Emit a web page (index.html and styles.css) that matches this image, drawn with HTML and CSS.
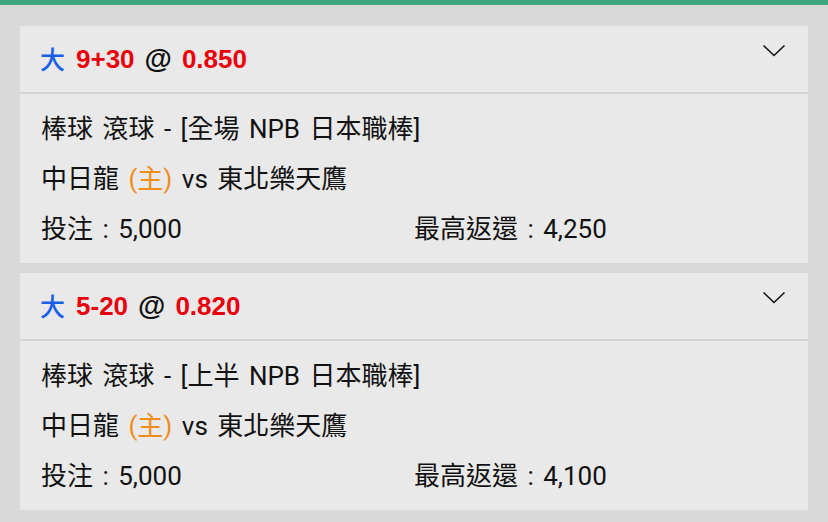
FILE: index.html
```html
<!DOCTYPE html>
<html lang="zh-Hant">
<head>
  <meta charset="UTF-8" />
  <meta name="viewport" content="width=device-width, initial-scale=1.0"/>
  <title>注單</title>
  <link rel="stylesheet" href="styles.css">
</head>
<body>

  <div class="top-bar"></div>

  <div class="bet-list">
    <div class="bet-card">
      <div class="bet-head">
        <span class="pick">大</span>
        <span class="line">9+30</span>
        <span class="at">@</span>
        <span class="odds">0.850</span>
        <svg class="chevron" width="24" height="14" viewBox="0 0 24 14"><path d="M1.5 1.5 L12 11.5 L22.5 1.5" fill="none" stroke="#111" stroke-width="1.6"/></svg>
      </div>
      <div class="bet-body">
        <p>棒球 滾球 - [全場 NPB 日本職棒]</p>
        <p>中日龍 <span class="home">(主)</span> vs 東北樂天鷹</p>
        <div class="amounts">
          <p>投注 : 5,000</p>
          <p>最高返還 : 4,250</p>
        </div>
      </div>
    </div>

    <div class="bet-card">
      <div class="bet-head">
        <span class="pick">大</span>
        <span class="line">5-20</span>
        <span class="at">@</span>
        <span class="odds">0.820</span>
        <svg class="chevron" width="24" height="14" viewBox="0 0 24 14"><path d="M1.5 1.5 L12 11.5 L22.5 1.5" fill="none" stroke="#111" stroke-width="1.6"/></svg>
      </div>
      <div class="bet-body">
        <p>棒球 滾球 - [上半 NPB 日本職棒]</p>
        <p>中日龍 <span class="home">(主)</span> vs 東北樂天鷹</p>
        <div class="amounts">
          <p>投注 : 5,000</p>
          <p>最高返還 : 4,100</p>
        </div>
      </div>
    </div>
  </div>

</body>
</html>
```

FILE: styles.css
```css
body {
  margin: 0;
  padding: 0;
  background-color: #d9d9d9;
  font-family: Roboto, "Noto Sans CJK TC", sans-serif;
  color: #111;
}

.top-bar {
  height: 5px;
  background-color: #40a47e;
}

.bet-list {
  display: flex;
  flex-direction: column;
  gap: 10px;
  padding: 21px 20px 10px;
}

.bet-card {
  background: #e9e9e9;
}

.bet-head {
  display: flex;
  align-items: center;
  gap: 10px;
  height: 66px;
  padding: 0 20px;
  border-bottom: 2px solid #d3d3d3;
  font-family: "Liberation Sans", "Noto Sans CJK TC", sans-serif;
  font-weight: bold;
  font-size: 26px;
}

.pick {
  color: #1a5fe8;
  font-family: "Noto Sans CJK TC", sans-serif;
  font-weight: 500;
  font-size: 25px;
  margin-top: -2px;
  margin-right: 1px;
}

.line, .odds {
  color: #e8000b;
}

.at {
  color: #111;
  font-size: 28px;
}

.chevron {
  margin-left: auto;
  margin-right: 2px;
  margin-top: -17px;
}

.bet-body {
  padding: 10px 21px 9px;
  font-size: 26px;
  word-spacing: 3px;
}

.bet-body p {
  margin: 0;
  line-height: 50px;
}

.home {
  color: #f08c1a;
}

.amounts {
  display: grid;
  grid-template-columns: 1fr 1fr;
}
```
